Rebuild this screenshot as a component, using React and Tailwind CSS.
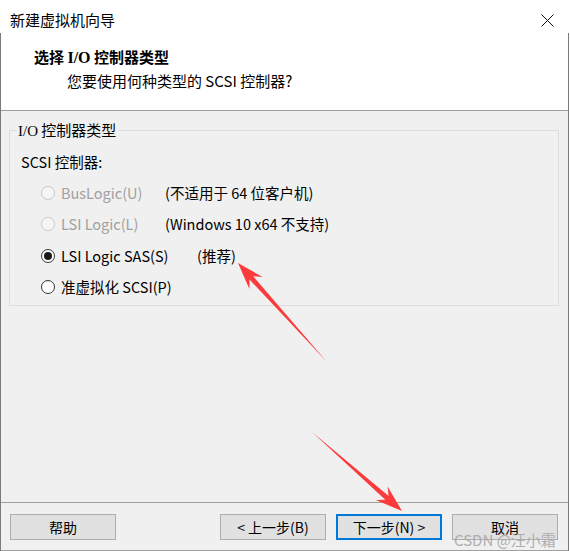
import React from "react";

const font = "font-['Noto_Sans_CJK_SC',sans-serif]";

function Radio({ checked, disabled }) {
  return (
    <span
      className={
        "flex h-[14px] w-[14px] shrink-0 items-center justify-center rounded-full border " +
        (disabled ? "border-[#c6c6c6] bg-[#f5f5f5]" : "border-[#333333] bg-white")
      }
    >
      {checked && <span className="h-[8px] w-[8px] rounded-full bg-[#1a1a1a]" />}
    </span>
  );
}

function Option({ label, note, labelWidth, disabled, checked }) {
  return (
    <div className="flex h-[31.5px] items-center pl-[31px]">
      <Radio checked={checked} disabled={disabled} />
      <span
        className={"ml-[6px] " + (disabled ? "text-[#a0a0a0]" : "text-black")}
        style={{ width: labelWidth }}
      >
        {label}
      </span>
      {note && <span className="text-black">{note}</span>}
    </div>
  );
}

function Button({ children, primary }) {
  return (
    <button
      className={
        "flex h-[26px] w-[106px] items-center justify-center bg-[#e1e1e1] text-[14px] text-black " +
        (primary ? "border-2 border-[#0078d7]" : "border border-[#adadad]")
      }
    >
      {children}
    </button>
  );
}

// red annotation arrow, from tail to tip
function arrowPoints(tx, ty, hx, hy) {
  const dx = hx - tx;
  const dy = hy - ty;
  const len = Math.hypot(dx, dy);
  const ux = dx / len;
  const uy = dy / len;
  const px = -uy;
  const py = ux;
  const at = (d, w) => [tx + ux * d + px * w, ty + uy * d + py * w];
  const pts = [
    [tx, ty],
    at(len - 20, 2.5),
    at(len - 27, 9),
    [hx, hy],
    at(len - 27, -9),
    at(len - 20, -2.5),
  ];
  return pts.map((p) => p[0].toFixed(1) + "," + p[1].toFixed(1)).join(" ");
}

export default function App() {
  return (
    <div className={"relative h-[551px] w-[569px] bg-white text-[14.5px] leading-[18px] text-black " + font}>
      {/* title bar */}
      <div className="flex h-[33px] items-start justify-between pl-[10px] pr-[15px] pt-[11px]">
        <span className="text-[15px]">新建虚拟机向导</span>
        <svg width="13" height="13" viewBox="0 0 13 13" className="mt-[3px]">
          <path d="M0.5 0.5 L12.5 12.5 M12.5 0.5 L0.5 12.5" stroke="#111" strokeWidth="1" fill="none" />
        </svg>
      </div>

      <div className="border-x border-[#7a7a7a]">
        {/* header */}
        <div className="h-[78px] border-b border-[#a0a0a0] bg-white pt-[15px]">
          <div className="pl-[33px] text-[15px] font-bold">
            选择 <span className="font-['Liberation_Serif',serif] text-[16px]">I/O</span> 控制器类型
          </div>
          <div className="mt-[5px] pl-[66px] text-[15px]">您要使用何种类型的 SCSI 控制器?</div>
        </div>

        {/* body */}
        <div className="h-[391px] bg-[#f0f0f0] pt-[10px]">
          <fieldset className="ml-[8px] mr-[9px] h-[185px] border border-[#dcdcdc] p-0">
            <legend className="ml-[6px] px-[2px] text-[15px]">
              <span className="font-['Liberation_Serif',serif]">I/O</span> 控制器类型
            </legend>
            <div className="mt-[13px] pl-[11px]">SCSI 控制器:</div>
            <div className="mt-[6px]">
              <Option label="BusLogic(U)" note="(不适用于 64 位客户机)" labelWidth={104} disabled />
              <Option label="LSI Logic(L)" note="(Windows 10 x64 不支持)" labelWidth={104} disabled />
              <Option label="LSI Logic SAS(S)" note="(推荐)" labelWidth={136} checked />
              <Option label="准虚拟化 SCSI(P)" />
            </div>
          </fieldset>
        </div>

        {/* footer */}
        <div className="flex h-[49px] items-start border-y border-[#a0a0a0] bg-[#f0f0f0] pt-[11px]">
          <div className="ml-[9px]">
            <Button>帮助</Button>
          </div>
          <div className="ml-auto mr-[10px] flex gap-[10px]">
            <Button>&lt; 上一步(B)</Button>
            <Button primary>下一步(N) &gt;</Button>
            <Button>取消</Button>
          </div>
        </div>
      </div>

      {/* watermark */}
      <div className="pointer-events-none absolute left-[454px] top-[531px] text-[15px] leading-[18px] text-[#a8a8a8] opacity-90">
        CSDN @汪小霜
      </div>

      {/* annotation arrows */}
      <svg className="pointer-events-none absolute left-0 top-0" width="570" height="551">
        <polygon points={arrowPoints(327, 362, 238, 263)} fill="#fb3b3b" />
        <polygon points={arrowPoints(312, 432, 402, 511)} fill="#fb3b3b" />
      </svg>
    </div>
  );
}
